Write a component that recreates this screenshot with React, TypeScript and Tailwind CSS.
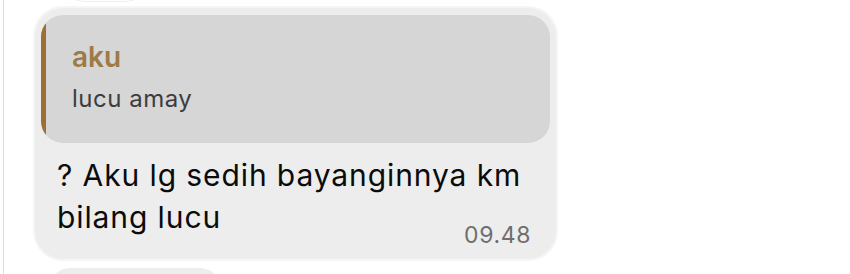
export default function App() {
  return (
    <div
      className="flex h-[274px] w-[850px] overflow-hidden bg-white"
      style={{ fontFamily: 'Inter, "Noto Sans", sans-serif' }}
    >
      <div className="ml-[3px] w-[1px] shrink-0 bg-[#dcdce2]" />
      <div className="flex flex-col pl-[31px]">
        {/* bottom edge of the previous bubble */}
        <div className="-mt-[40px] ml-[26px] h-[42px] w-[88px] shrink-0 rounded-b-[24px] border border-[#eeeeee] bg-white" />

        <div className="mt-[6px] flex h-[251px] w-[521px] shrink-0 flex-col rounded-[28px] bg-[#ededed] px-[6px] pt-[7px] ring-2 ring-[#f5f5f5]">
          <div className="flex h-[128px] shrink-0 overflow-hidden rounded-[22px] bg-[#d6d6d6]">
            <div className="w-[5px] shrink-0 bg-[#9c7035]" />
            <div className="flex flex-col pl-[26px] pt-[25px]">
              <span className="text-[28px] font-semibold leading-[34px] text-[#9d7a46]">aku</span>
              <span className="mt-[10px] text-[24px] leading-[30px] tracking-[0.5px] text-[#3d3d3d]">
                lucu amay
              </span>
            </div>
          </div>

          <div className="px-[16px] pt-[11px] text-[30px] leading-[42px] tracking-[0.9px] text-[#0b0b0b]">
            ? Aku lg sedih bayanginnya km
            <br />
            bilang lucu
          </div>
          <div className="-mt-[17px] pr-[19px] text-right text-[23px] leading-[28px] tracking-[0.6px] text-[#6e6e6e]">
            09.48
          </div>
        </div>

        {/* top of the next bubble */}
        <div className="ml-[15px] mt-[9px] h-[40px] w-[170px] shrink-0 rounded-[24px] bg-[#ededed]" />
      </div>
    </div>
  )
}
